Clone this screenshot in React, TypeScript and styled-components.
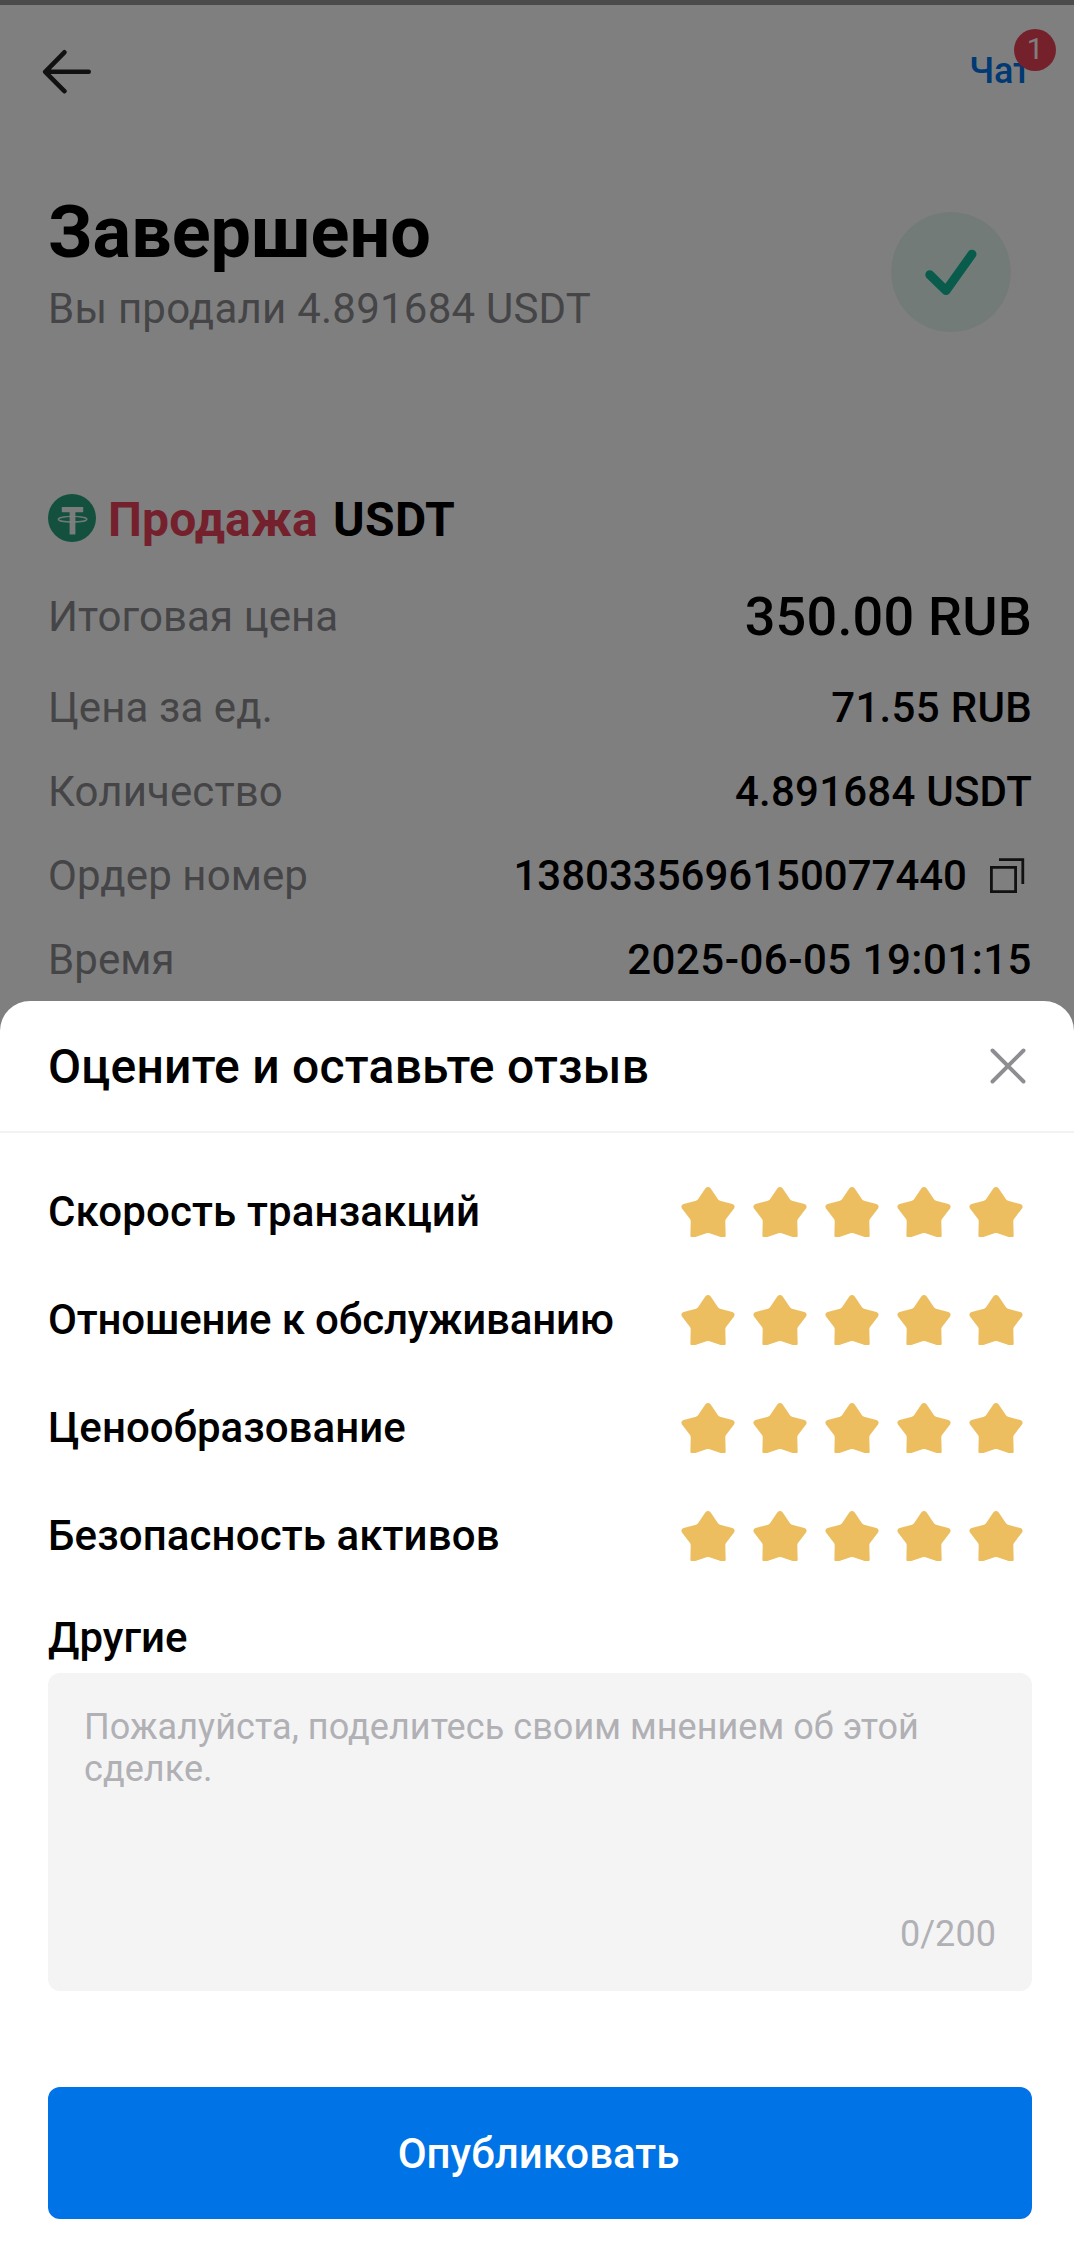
import React from "react";
import styled, { createGlobalStyle } from "styled-components";

const GlobalStyle = createGlobalStyle`
  *, *::before, *::after { box-sizing: border-box; }
  body { margin: 0; background: #fff; }
  h1, h2, p { margin: 0; font: inherit; }
`;

const Screen = styled.div`
  position: relative;
  width: 1074px;
  height: 2267px;
  overflow: hidden;
  background: #fff;
  color: #000;
  font-family: Roboto, "Noto Sans", sans-serif;
`;

const OrderPage = styled.div`
  display: flex;
  flex-direction: column;
`;

const StatusStrip = styled.div`
  height: 5px;
  background: #979797;
`;

const TopBar = styled.header`
  display: flex;
  align-items: center;
  justify-content: space-between;
  height: 134px;
  padding: 0 43px 0 42px;
`;

const ChatLink = styled.a`
  position: relative;
  font-size: 36px;
  line-height: 42px;
  font-weight: 500;
  color: #0073e6;
  padding-bottom: 2px;
`;

const Badge = styled.span`
  position: absolute;
  left: 45px;
  top: -21px;
  width: 42px;
  height: 42px;
  border-radius: 50%;
  background: #eb4359;
  color: #fff;
  font-size: 30px;
  line-height: 39px;
  font-weight: 400;
  text-align: center;
`;

const Hero = styled.section`
  display: flex;
  justify-content: space-between;
  align-items: center;
  height: 144px;
  margin-top: 51px;
  padding: 0 63px 0 48px;
`;

const HeroTitle = styled.h1`
  font-size: 72px;
  line-height: 84px;
  font-weight: 700;
`;

const HeroText = styled.p`
  margin-top: 9px;
  font-size: 42px;
  line-height: 50px;
  color: #8a8a8e;
  letter-spacing: 0.23px;
`;

const CheckDisc = styled.div`
  display: flex;
  margin-top: 20px;
  width: 120px;
  height: 120px;
  border-radius: 50%;
  background: #e7f7f2;
`;

const Asset = styled.div`
  display: flex;
  align-items: center;
  height: 48px;
  margin: 160px 48px 27px;
`;

const AssetLabel = styled.span<{ $tone: string; $gap: number; $spacing?: number }>`
  padding-top: 3px;
  margin-left: ${(p) => p.$gap}px;
  font-size: 48px;
  line-height: 48px;
  font-weight: 700;
  letter-spacing: ${(p) => p.$spacing ?? 0}px;
  color: ${(p) => p.$tone};
`;

const Row = styled.div<{ $tall?: boolean }>`
  display: flex;
  align-items: center;
  justify-content: space-between;
  height: ${(p) => (p.$tall ? 96 : 84)}px;
  margin-bottom: ${(p) => (p.$tall ? 1 : 0)}px;
  padding: 0 42px 0 48px;
`;

const RowLabel = styled.span`
  font-size: 42px;
  line-height: 50px;
  color: #8a8a8e;
  letter-spacing: 0.1px;
`;

const RowValue = styled.span<{ $large?: boolean; $spacing?: number }>`
  display: flex;
  align-items: center;
  gap: 22px;
  font-size: ${(p) => (p.$large ? 54 : 42)}px;
  line-height: ${(p) => (p.$large ? 62 : 50)}px;
  font-weight: 500;
  letter-spacing: ${(p) => p.$spacing ?? 0}px;
`;

const CopySlot = styled.i`
  display: flex;
  margin: 0 7px 2px 0;
`;

const Scrim = styled.div`
  position: absolute;
  inset: 0;
  display: flex;
  flex-direction: column;
  justify-content: flex-end;
  background: rgba(0, 0, 0, 0.5);
`;

const Sheet = styled.section`
  display: flex;
  flex-direction: column;
  height: 1266px;
  border-radius: 30px 30px 0 0;
  background: #fff;
`;

const SheetHeader = styled.div`
  display: flex;
  align-items: center;
  justify-content: space-between;
  height: 132px;
  padding: 0 48px;
  border-bottom: 2px solid #f2f2f2;
`;

const SheetTitle = styled.h2`
  padding-top: 1px;
  font-size: 48px;
  line-height: 56px;
  font-weight: 500;
  letter-spacing: 0.25px;
`;

const Ratings = styled.div`
  display: flex;
  flex-direction: column;
  margin-top: 25px;
`;

const RatingRow = styled.div`
  display: flex;
  align-items: center;
  justify-content: space-between;
  height: 108px;
  padding: 0 42px 0 48px;
`;

const FieldLabel = styled.span<{ $spacing?: number }>`
  font-size: 42px;
  line-height: 48px;
  font-weight: 500;
  letter-spacing: ${(p) => p.$spacing ?? 0}px;
`;

const Stars = styled.div`
  display: flex;
`;

const Comment = styled.div`
  display: flex;
  flex-direction: column;
  padding: 24px 42px 0 48px;
`;

const CommentBox = styled.div`
  display: flex;
  flex-direction: column;
  justify-content: space-between;
  height: 318px;
  margin-top: 11px;
  padding: 33px 36px;
  border-radius: 12px;
  background: #f4f4f4;
  color: #b0b0b5;
  font-size: 36px;
  line-height: 42px;
  letter-spacing: 0.06px;
`;

const Counter = styled.span`
  align-self: flex-end;
  margin-bottom: 3px;
`;

const Publish = styled.button`
  height: 132px;
  margin: 96px 42px 0 48px;
  padding: 2px 3px 0 0;
  border: 0;
  border-radius: 12px;
  background: #0073e6;
  color: #fff;
  font-family: inherit;
  font-size: 42px;
  line-height: 50px;
  font-weight: 500;
`;

const BackIcon = () => (
  <svg width="50" height="48" viewBox="0 0 50 48" fill="none" stroke="#222" strokeWidth="4.6" strokeLinecap="round" strokeLinejoin="round">
    <path d="M46.7 23.8H3.5M22.4 4.3L3.2 23.8l19.2 19.4" />
  </svg>
);

const CheckIcon = () => (
  <svg width="120" height="120" viewBox="0 0 120 120" fill="none" stroke="#12b899" strokeWidth="9" strokeLinecap="round" strokeLinejoin="round">
    <path d="M38.8 62.7L55 78.6 81 42.2" />
  </svg>
);

const TetherIcon = () => (
  <svg width="48" height="48" viewBox="0 0 48 48">
    <circle cx="24" cy="24" r="24" fill="#26a17b" />
    <path d="M13.8 13h21.4v5.2h-7.8v22.2h-5.8V18.2h-7.8z" fill="#fff" fillOpacity="0.95" />
    <ellipse cx="24.6" cy="25.2" rx="14.3" ry="2.8" fill="none" stroke="#fff" strokeOpacity="0.85" strokeWidth="1.4" />
  </svg>
);

const CopyIcon = () => (
  <svg width="36" height="36" viewBox="0 0 36 36" fill="none" stroke="#222" strokeWidth="2.8">
    <path d="M2.4 10.4h24.2v24.2H2.4zM10 2.6h23.8V27" />
  </svg>
);

const CloseIcon = () => (
  <svg width="36" height="36" viewBox="0 0 36 36" fill="none" stroke="#8e8e92" strokeWidth="3.9" strokeLinecap="round">
    <path d="M2.5 2.5l31 31M33.5 2.5l-31 31" />
  </svg>
);

const Star = () => (
  <svg width="72" height="72" viewBox="0 0 72 72" fill="#edbe60">
    <path d="M33.3 12.4Q36 9.8 38.7 12.4L45.8 23Q46.5 24.2 48 24.7L60.4 28.1Q63.6 29.4 62.2 32.2L54 43Q53.2 44 53.3 45.6L53.7 60Q53.6 61 52.6 61H48.6L37.6 57.3Q36 56.7 34.4 57.3L23.4 61H19.4Q18.4 61 18.4 60L18.7 45.6Q18.8 44 18 43L9.8 32.2Q8.4 29.4 11.6 28.1L24 24.7Q25.5 24.2 26.2 23Z" />
  </svg>
);

const details = [
  { label: "Итоговая цена", value: "350.00 RUB", large: true, spacing: 0.2 },
  { label: "Цена за ед.", value: "71.55 RUB", spacing: 0.3 },
  { label: "Количество", value: "4.891684 USDT", spacing: 0.22 },
  { label: "Ордер номер", value: "1380335696150077440", copy: true },
  { label: "Время", value: "2025-06-05 19:01:15", spacing: 0.5 },
];

const criteria = [
  { name: "Скорость транзакций", spacing: 0.15 },
  { name: "Отношение к обслуживанию", spacing: -0.17 },
  { name: "Ценообразование", spacing: 0.03 },
  { name: "Безопасность активов", spacing: 0.12 },
];

export default function App() {
  return (
    <Screen>
      <GlobalStyle />
      <OrderPage>
        <StatusStrip />
        <TopBar>
          <BackIcon />
          <ChatLink>
            Чат
            <Badge>1</Badge>
          </ChatLink>
        </TopBar>
        <Hero>
          <div>
            <HeroTitle>Завершено</HeroTitle>
            <HeroText>Вы продали 4.891684 USDT</HeroText>
          </div>
          <CheckDisc>
            <CheckIcon />
          </CheckDisc>
        </Hero>
        <Asset>
          <TetherIcon />
          <AssetLabel $tone="#e8435a" $gap={12} $spacing={0.1}>Продажа</AssetLabel>
          <AssetLabel $tone="#000" $gap={15} $spacing={0.4}>USDT</AssetLabel>
        </Asset>
        {details.map((d) => (
          <Row key={d.label} $tall={d.large}>
            <RowLabel>{d.label}</RowLabel>
            <RowValue $large={d.large} $spacing={d.spacing}>
              {d.value}
              {d.copy && (
                <CopySlot>
                  <CopyIcon />
                </CopySlot>
              )}
            </RowValue>
          </Row>
        ))}
      </OrderPage>
      <Scrim>
        <Sheet>
          <SheetHeader>
            <SheetTitle>Оцените и оставьте отзыв</SheetTitle>
            <CloseIcon />
          </SheetHeader>
          <Ratings>
            {criteria.map((c) => (
              <RatingRow key={c.name}>
                <FieldLabel $spacing={c.spacing}>{c.name}</FieldLabel>
                <Stars>
                  {[1, 2, 3, 4, 5].map((n) => (
                    <Star key={n} />
                  ))}
                </Stars>
              </RatingRow>
            ))}
          </Ratings>
          <Comment>
            <FieldLabel>Другие</FieldLabel>
            <CommentBox>
              <p>Пожалуйста, поделитесь своим мнением об этой сделке.</p>
              <Counter>0/200</Counter>
            </CommentBox>
          </Comment>
          <Publish>Опубликовать</Publish>
        </Sheet>
      </Scrim>
    </Screen>
  );
}
